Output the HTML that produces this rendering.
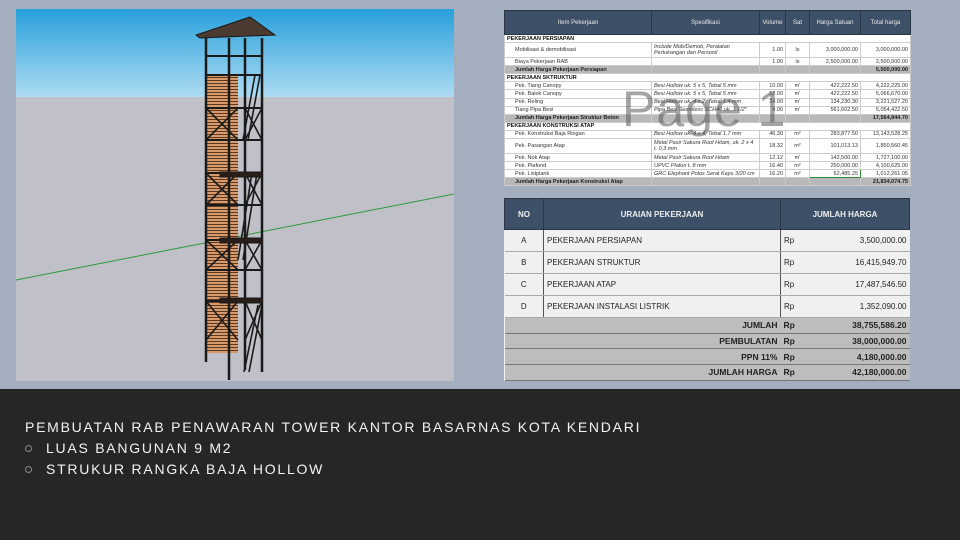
<!DOCTYPE html>
<html><head><meta charset="utf-8"><style>
*{margin:0;padding:0;box-sizing:border-box}
body{width:960px;height:540px;overflow:hidden;background:#a3aebf;font-family:"Liberation Sans",sans-serif;position:relative}
.bot{position:absolute;left:0;top:389px;width:960px;height:151px;background:#262626}
.bt{position:absolute;color:#f2f2f2;font-size:14px;letter-spacing:1.75px;white-space:nowrap}
.bul{position:absolute;width:7px;height:7px;border:1px solid #888;border-radius:50%}
table{border-collapse:collapse;position:absolute;table-layout:fixed}
.t1{left:504px;top:10px;width:406px;font-size:5.5px;background:#fff}
.t1 td{border:0.5px solid #ccc;height:8.1px;padding:0 2px;white-space:nowrap;overflow:hidden;color:#333}
.t1 th{background:#3e5068;color:#e8e8e8;font-weight:normal;height:24px;font-size:6px;border:1px solid #2a3646}
.t1 .s td{background:#b8b8b8;font-weight:bold;color:#222}
.t1 .h td{font-weight:bold;color:#111}
.r{text-align:right}.c{text-align:center}.i{font-style:italic}
.t2{left:504px;top:198px;width:405px;font-size:8px;background:#f0f0f0}
.t2 th{background:#3e5068;color:#eee;height:31px;font-size:8px;border:1px solid #2a3646}
.t2 td{height:22px;border-bottom:1px solid #aaa;padding:0 3px;color:#222}
.t2 .g td{background:#bdbdbd;height:15.7px;font-weight:bold;font-size:8.5px;border-bottom:1.5px solid #777}
</style></head><body>
<svg style="position:absolute;left:16px;top:9px" width="438" height="372" viewBox="16 9 438 372">
<defs><linearGradient id="sk" x1="0" y1="0" x2="0" y2="1"><stop offset="0" stop-color="#27a0db"/><stop offset="1" stop-color="#aedbf2"/></linearGradient>
<pattern id="wd" width="4" height="3" patternUnits="userSpaceOnUse"><rect width="4" height="3" fill="#d89a6a"/><rect y="2" width="4" height="1" fill="#5a3a22"/></pattern></defs>
<rect x="16" y="9" width="438" height="88" fill="url(#sk)"/>
<rect x="16" y="97" width="438" height="284" fill="#c0c0c8"/>
<line x1="16" y1="280" x2="454" y2="194" stroke="#2a9a3a" stroke-width="1"/>
<rect x="206" y="75" width="32" height="278" fill="url(#wd)"/>
<g stroke="#1a1a1a" fill="none">
<polygon points="250,17 196,35 200,38 275,35" fill="#4a3a30" stroke="#1a1a1a"/>
<g stroke-width="2.5"><line x1="206" y1="38" x2="206" y2="362"/><line x1="229" y1="38" x2="229" y2="380"/><line x1="262" y1="38" x2="262" y2="372"/><line x1="245" y1="38" x2="245" y2="370"/></g>
<g stroke-width="2"><line x1="206" y1="56" x2="262" y2="56"/><line x1="206" y1="75" x2="262" y2="75"/><line x1="206" y1="108" x2="262" y2="108"/><line x1="206" y1="140" x2="262" y2="140"/><line x1="206" y1="173" x2="262" y2="173"/><line x1="206" y1="205" x2="262" y2="205"/><line x1="206" y1="240" x2="262" y2="240"/><line x1="206" y1="270" x2="262" y2="270"/><line x1="206" y1="301" x2="262" y2="301"/></g>
<g stroke-width="1.6"><path d="M206 108L238 140M238 108L206 140M245 108L262 140M262 108L245 140M206 173L238 205M238 173L206 205M245 173L262 205M262 173L245 205M206 240L238 270M238 240L206 270M245 240L262 270M262 240L245 270M206 301L238 340M238 301L206 340M245 301L262 340M262 301L245 340"/>
<path d="M255 75L243 140M260 75L248 140M252 173L238 260M257 173L243 260M258 305L244 372M262 305L249 372"/></g>
<rect x="220" y="172" width="42" height="5" fill="#2a1e18"/><rect x="220" y="238" width="42" height="5" fill="#2a1e18"/><rect x="220" y="298" width="42" height="5" fill="#2a1e18"/>
</g></svg>
<table class="t1">
<colgroup><col style="width:147px"><col style="width:108px"><col style="width:26px"><col style="width:24px"><col style="width:51px"><col style="width:50px"></colgroup>
<tr><th>Item Pekerjaan</th><th>Spesifikasi</th><th>Volume</th><th>Sat</th><th>Harga Satuan</th><th>Total harga</th></tr>
<tr class="h"><td colspan="6">PEKERJAAN PERSIAPAN</td></tr>
<tr><td style="height:15px;padding-left:10px">Mobilisasi &amp; demobilisasi</td><td class="i" style="white-space:normal;line-height:6.5px">Include Mob/Demob, Peralatan Pertukangan dan Personil</td><td class="r">1.00</td><td class="c">ls</td><td class="r">3,000,000.00</td><td class="r">3,000,000.00</td></tr>
<tr><td style="padding-left:10px">Biaya Pekerjaan RAB</td><td></td><td class="r">1.00</td><td class="c">ls</td><td class="r">2,500,000.00</td><td class="r">2,500,000.00</td></tr>
<tr class="s"><td style="padding-left:10px">Jumlah Harga Pekerjaan Persiapan</td><td></td><td></td><td></td><td></td><td class="r">5,500,000.00</td></tr>
<tr class="h"><td colspan="6">PEKERJAAN SKTRUKTUR</td></tr>
<tr><td style="padding-left:10px">Pek. Tiang Canopy</td><td class="i">Besi Hollow uk. 5 x 5, Tebal 5 mm</td><td class="r">10.00</td><td class="c">m'</td><td class="r">422,222.50</td><td class="r">4,222,225.00</td></tr>
<tr><td style="padding-left:10px">Pek. Balok Canopy</td><td class="i">Besi Hollow uk. 5 x 5, Tebal 5 mm</td><td class="r">12.00</td><td class="c">m'</td><td class="r">422,222.50</td><td class="r">5,066,670.00</td></tr>
<tr><td style="padding-left:10px">Pek. Reling</td><td class="i">Besi Hollow uk. 4 x 2, Tebal 1.4 mm</td><td class="r">24.00</td><td class="c">m'</td><td class="r">134,230.30</td><td class="r">3,221,527.20</td></tr>
<tr><td style="padding-left:10px">Tiang Pipa Besi</td><td class="i">Pipa Besi Seamless SCH40 uk. 1 1/2"</td><td class="r">9.00</td><td class="c">m'</td><td class="r">561,602.50</td><td class="r">5,054,422.50</td></tr>
<tr class="s"><td style="padding-left:10px">Jumlah Harga Pekerjaan Struktur Beton</td><td></td><td></td><td></td><td></td><td class="r">17,564,844.70</td></tr>
<tr class="h"><td colspan="6">PEKERJAAN KONSTRUKSI ATAP</td></tr>
<tr><td style="padding-left:10px">Pek. Konstruksi Baja Ringan</td><td class="i">Besi Hollow uk. 4 x 4, Tebal 1,7 mm</td><td class="r">46.30</td><td class="c">m²</td><td class="r">283,877.50</td><td class="r">13,143,528.25</td></tr>
<tr><td style="height:15px;padding-left:10px">Pek. Pasangan Atap</td><td class="i" style="white-space:normal;line-height:6.5px">Metal Pasir Sakura Roof Hitam, uk. 2 x 4 t. 0,3 mm</td><td class="r">18.32</td><td class="c">m²</td><td class="r">101,013.13</td><td class="r">1,850,560.45</td></tr>
<tr><td style="padding-left:10px">Pek. Nok Atap</td><td class="i">Metal Pasir Sakura Roof Hitam</td><td class="r">12.12</td><td class="c">m'</td><td class="r">142,500.00</td><td class="r">1,727,100.00</td></tr>
<tr><td style="padding-left:10px">Pek. Plafond</td><td class="i">UPVC Plafon t. 8 mm</td><td class="r">16.40</td><td class="c">m²</td><td class="r">250,000.00</td><td class="r">4,100,625.00</td></tr>
<tr><td style="padding-left:10px">Pek. Listplank</td><td class="i">GRC Elephant Polos Serat Kayu 3/20 cm</td><td class="r">16.20</td><td class="c">m²</td><td class="r" style="border:1px solid #2a8a3a">62,485.25</td><td class="r">1,012,261.05</td></tr>
<tr class="s"><td style="padding-left:10px">Jumlah Harga Pekerjaan Konstruksi Atap</td><td></td><td></td><td></td><td></td><td class="r">21,834,074.75</td></tr>
</table>
<div style="position:absolute;left:622px;top:80px;font-size:50px;color:rgba(90,90,90,0.55);letter-spacing:1px">Page 1</div>
<table class="t2">
<colgroup><col style="width:39px"><col style="width:237px"><col style="width:30px"><col style="width:99px"></colgroup>
<tr><th>NO</th><th>URAIAN PEKERJAAN</th><th colspan="2">JUMLAH HARGA</th></tr>
<tr><td class="c" style="border-right:1px solid #555">A</td><td>PEKERJAAN PERSIAPAN</td><td style="border-left:1px solid #555">Rp</td><td class="r">3,500,000.00</td></tr>
<tr><td class="c" style="border-right:1px solid #555">B</td><td>PEKERJAAN STRUKTUR</td><td style="border-left:1px solid #555">Rp</td><td class="r">16,415,949.70</td></tr>
<tr><td class="c" style="border-right:1px solid #555">C</td><td>PEKERJAAN ATAP</td><td style="border-left:1px solid #555">Rp</td><td class="r">17,487,546.50</td></tr>
<tr><td class="c" style="border-right:1px solid #555">D</td><td>PEKERJAAN INSTALASI LISTRIK</td><td style="border-left:1px solid #555">Rp</td><td class="r">1,352,090.00</td></tr>
<tr class="g"><td colspan="2" class="r">JUMLAH</td><td>Rp</td><td class="r">38,755,586.20</td></tr>
<tr class="g"><td colspan="2" class="r">PEMBULATAN</td><td>Rp</td><td class="r">38,000,000.00</td></tr>
<tr class="g"><td colspan="2" class="r">PPN 11%</td><td>Rp</td><td class="r">4,180,000.00</td></tr>
<tr class="g"><td colspan="2" class="r">JUMLAH HARGA</td><td>Rp</td><td class="r">42,180,000.00</td></tr>
</table>
<div class="bot"></div>
<div class="bt" style="left:25px;top:419px">PEMBUATAN RAB PENAWARAN TOWER KANTOR BASARNAS KOTA KENDARI</div>
<div class="bul" style="left:25px;top:445px"></div><div class="bt" style="left:46px;top:440px">LUAS BANGUNAN 9 M2</div>
<div class="bul" style="left:25px;top:466px"></div><div class="bt" style="left:46px;top:461px">STRUKUR RANGKA BAJA HOLLOW</div>
</body></html>
